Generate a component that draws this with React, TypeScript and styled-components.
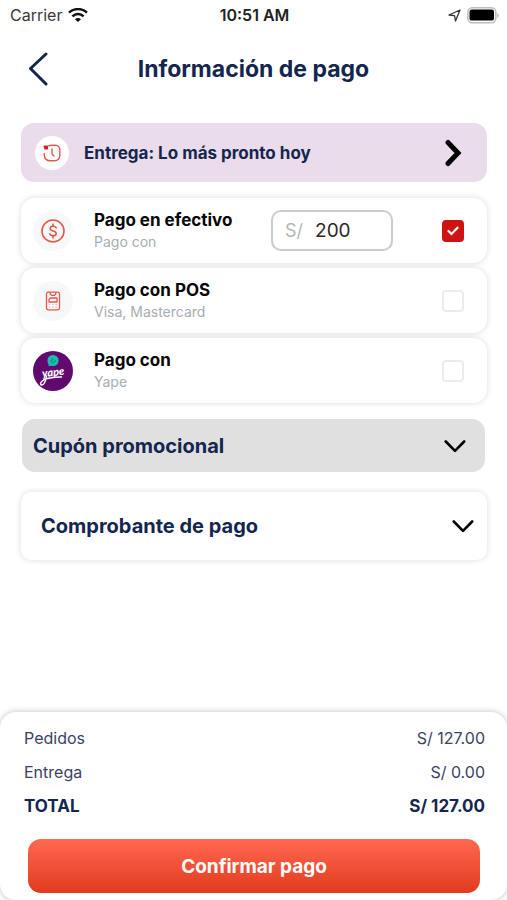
import React, { useState } from "react";
import styled, { createGlobalStyle } from "styled-components";

const navy = "#14264f";
const coral = "#e4574b";

const GlobalStyle = createGlobalStyle`
  *, *::before, *::after { box-sizing: border-box; }
  body { margin: 0; background: #fff; font-family: Inter, "Open Sans", sans-serif; }
  button, input { font: inherit; color: inherit; }
  svg { display: block; flex: none; }
`;

const Page = styled.div`
  display: flex;
  flex-direction: column;
  min-height: 100vh;
  color: ${navy};
`;

const StatusBar = styled.div`
  display: grid;
  grid-template-columns: 1fr auto 1fr;
  align-items: center;
  height: 30px;
  padding: 0 8px 0 10px;
  font-size: 16px;
  color: #3a3a3a;
`;

const StatusGroup = styled.div<{ $end?: boolean }>`
  display: flex;
  align-items: center;
  justify-content: ${(p) => (p.$end ? "flex-end" : "flex-start")};
  gap: 6px;
`;

const Clock = styled.time`
  font-weight: 600;
  color: #222;
`;

const Header = styled.header`
  display: grid;
  grid-template-columns: 48px 1fr 48px;
  align-items: center;
  height: 78px;
  padding: 0 14px;
`;

const BackButton = styled.button`
  display: grid;
  place-items: center;
  height: 48px;
  padding: 0;
  border: 0;
  background: none;
  cursor: pointer;
`;

const Title = styled.h1`
  margin: 0;
  font-size: 23px;
  line-height: 32px;
  font-weight: 700;
  text-align: center;
`;

const Content = styled.main`
  display: flex;
  flex-direction: column;
  gap: 16px;
  padding: 15px 20px 24px 21px;
`;

const DeliveryButton = styled.button`
  display: flex;
  align-items: center;
  gap: 15px;
  height: 59px;
  padding: 0 24px 0 14px;
  border: 0;
  border-radius: 13px;
  background: #eadcea;
  font-size: 17px;
  font-weight: 700;
  text-align: left;
  cursor: pointer;
`;

const Grow = styled.span`
  flex: 1;
`;

const IconDisc = styled.span<{ $size: number; $color: string }>`
  display: grid;
  place-items: center;
  flex: none;
  width: ${(p) => p.$size}px;
  height: ${(p) => p.$size}px;
  border-radius: 50%;
  background: ${(p) => p.$color};
  overflow: hidden;
`;

const Methods = styled.div`
  display: flex;
  flex-direction: column;
  gap: 5px;
`;

const MethodCard = styled.div`
  display: flex;
  align-items: center;
  height: 65px;
  padding: 0 23px 0 12px;
  border-radius: 14px;
  background: #fff;
  box-shadow: 0 0 6px rgba(0, 0, 0, 0.14);
`;

const MethodText = styled.label`
  display: flex;
  flex-direction: column;
  flex: 1;
  margin-left: 21px;
  cursor: pointer;
`;

const MethodName = styled.span`
  font-size: 17px;
  line-height: 23px;
  font-weight: 700;
  color: #050505;
`;

const MethodDetail = styled.span`
  font-size: 14px;
  line-height: 20px;
  color: #a9adb5;
`;

const AmountField = styled.label`
  display: flex;
  align-items: center;
  gap: 12px;
  width: 122px;
  height: 41px;
  margin-right: 49px;
  padding: 0 12px;
  border: 2px solid #cbcbcb;
  border-radius: 10px;
  font-size: 18px;
  color: #b5b5b5;
`;

const AmountInput = styled.input`
  flex: 1;
  min-width: 0;
  padding: 0;
  border: 0;
  outline: 0;
  background: none;
  font-size: 19px;
  color: #2b2626;
`;

const CheckFrame = styled.span`
  display: grid;
  place-items: center;
  width: 22px;
  height: 22px;

  > * { grid-area: 1 / 1; }
  svg { pointer-events: none; }
`;

const CheckInput = styled.input`
  appearance: none;
  width: 22px;
  height: 22px;
  margin: 0;
  border: 2px solid #ebebeb;
  border-radius: 4px;
  background: #fff;
  cursor: pointer;

  &:checked {
    border-color: #cf1312;
    background: #cf1312;
  }
`;

const Panel = styled.button<{ $raised?: boolean }>`
  display: flex;
  align-items: center;
  height: ${(p) => (p.$raised ? 68 : 53)}px;
  margin: ${(p) => (p.$raised ? "4px 0 0" : "0 2px 0 1px")};
  padding: ${(p) => (p.$raised ? "0 13px 0 20px" : "0 19px 0 11px")};
  border: 0;
  border-radius: ${(p) => (p.$raised ? 10 : 13)}px;
  background: ${(p) => (p.$raised ? "#fff" : "#e0e0e0")};
  box-shadow: ${(p) => (p.$raised ? "0 0 6px rgba(0, 0, 0, 0.14)" : "none")};
  font-size: 20px;
  font-weight: 700;
  text-align: left;
  cursor: pointer;
`;

const Footer = styled.footer`
  display: flex;
  flex-direction: column;
  margin-top: auto;
  padding: 9px 22px 7px 24px;
  border-radius: 16px;
  background: #fff;
  box-shadow: 0 0 6px rgba(0, 0, 0, 0.26);
`;

const Totals = styled.dl`
  margin: 0;
`;

const TotalRow = styled.div<{ $strong?: boolean }>`
  display: flex;
  justify-content: space-between;
  font-size: ${(p) => (p.$strong ? 17 : 16)}px;
  line-height: 34px;
  font-weight: ${(p) => (p.$strong ? 700 : 400)};
  color: ${(p) => (p.$strong ? navy : "#3c4263")};

  dd { margin: 0; }
`;

const ConfirmButton = styled.button`
  height: 54px;
  margin: 16px 5px 0 4px;
  border: 0;
  border-radius: 13px;
  background: linear-gradient(#ff6950, #e23a1e);
  font-size: 19px;
  font-weight: 700;
  color: #fff;
  cursor: pointer;
`;

const WifiIcon = () => (
  <svg width="20" height="15" viewBox="0 0 20 15" fill="none" stroke="#111" strokeWidth="2.5">
    <path d="M1 4.7a13 13 0 0 1 18 0" />
    <path d="M4.4 8.3a8.2 8.2 0 0 1 11.200 0" />
    <path d="M10 14 7 11.200a4.200 4.200 0 0 1 6 0z" fill="#111" stroke="none" />
  </svg>
);

const LocationIcon = () => (
  <svg width="13" height="13" viewBox="0 0 13 13" fill="none" stroke="#333" strokeWidth="1.3" strokeLinejoin="round">
    <path d="M12 1 1 6l5.500.700L7.500 12z" />
  </svg>
);

const BatteryIcon = () => (
  <svg width="32" height="17" viewBox="0 0 32 17">
    <rect x="0.8" y="0.8" width="28" height="15" rx="4.5" fill="#fff" stroke="#bdbdbd" strokeWidth="1.6" />
    <rect x="2.5" y="2.6" width="24.5" height="11" rx="2.2" fill="#000" />
    <path d="M30.200 6v5a2.800 2.800 0 0 0 0-5z" fill="#bdbdbd" />
  </svg>
);

const BackIcon = () => (
  <svg width="21" height="34" viewBox="0 0 21 34" fill="none" stroke={navy} strokeWidth="3" strokeLinecap="round" strokeLinejoin="round">
    <path d="M18 2 2.500 16.500 18 32" />
  </svg>
);

const ForwardIcon = () => (
  <svg width="20" height="28" viewBox="0 0 20 28" fill="none" stroke="#000" strokeWidth="5" strokeLinecap="round">
    <path d="M5 3.500 15 14 5 24.500" />
  </svg>
);

const DownIcon = () => (
  <svg width="22" height="14" viewBox="0 0 22 14" fill="none" stroke="#000" strokeWidth="2.6" strokeLinecap="round" strokeLinejoin="round">
    <path d="m1.800 2.500 9.200 9.300 9.200-9.300" />
  </svg>
);

const HistoryIcon = () => (
  <svg width="18" height="18" viewBox="0 0 18 18" fill="none" stroke={coral} strokeWidth="1.4" strokeLinecap="round" strokeLinejoin="round">
    <path d="M5.500 1.800C6.500 1.300 7.500 1.200 9 1.200h3.200a4.600 4.600 0 0 1 4.600 4.600v6a5 5 0 0 1-5 5H7.500c-3.600 0-6.200-2-6.200-5.500V9.500" />
    <path d="M1.300 2.200h3v2.600H2z" fill="#d3202a" stroke="#d3202a" />
    <path d="M9 5v4.300q0 1.400 2 2.700" />
  </svg>
);

const DollarIcon = () => (
  <svg width="24" height="24" viewBox="0 0 24 24" fill="none" stroke={coral} strokeWidth="1.6" strokeLinecap="round">
    <circle cx="12" cy="12" r="11" />
    <path d="M15.200 8.800c-.5-1-1.600-1.600-3.100-1.600-1.700 0-2.900.8-2.900 2.200 0 3.200 6 1.800 6 5 0 1.500-1.200 2.400-3.100 2.400-1.700 0-2.900-.7-3.400-1.900M12 5v2M12 17v2" />
  </svg>
);

const PosIcon = () => (
  <svg width="16" height="20" viewBox="0 0 16 20" fill="none" stroke={coral} strokeWidth="1.3" strokeLinejoin="round">
    <rect x="1.500" y="1.200" width="13" height="17.600" rx="1.800" />
    <path d="M5.200 1.200v1.900l1.300 1.200h3l1.300-1.200V1.200" />
    <path d="M5.500 7H12v4H4V8.500z" />
    <path d="M4 13.500h1m2 0h1.500m2 0H12M4 16h1m2 0h1.500m2 0H12" strokeWidth=".8" opacity=".5" />
  </svg>
);

const YapeLogo = () => (
  <svg width="40" height="40" viewBox="0 0 40 40" role="img" aria-label="Yape">
    <path d="M15.300 15.200 16 11.800l3.200 2.500z" fill="#18bfae" />
    <circle cx="20" cy="9.500" r="5.600" fill="#18bfae" />
    <path d="M17.800 9.200c.2 3.700 4.600 3.100 4.700-.4M18.700 7.900c1.200-1.300 1.700.8.500 1.700" fill="none" stroke="#087f87" strokeWidth="1" />
    <text x="9" y="25" fill="#fff" fontFamily="Lato, sans-serif" fontSize="11" fontStyle="italic" fontWeight="900" transform="rotate(-7 20 22)">yape</text>
    <path d="M13.500 25c-.8 5.500-2.800 9.500-5 9-2.600-.7.300-5.500 6-6.500 4.800-.8 8.500-1.800 14-1.500" fill="none" stroke="#fff" strokeWidth="1.500" strokeLinecap="round" />
  </svg>
);

const TickIcon = () => (
  <svg width="12" height="10" viewBox="0 0 12 10" fill="none" stroke="#fff" strokeWidth="2.200" strokeLinecap="round">
    <path d="m1.500 5 3 3 6-6.300" />
  </svg>
);

type Method = { id: string; name: string; detail: string; icon: React.ReactNode; disc: string };

const methods: Method[] = [
  { id: "cash", name: "Pago en efectivo", detail: "Pago con", icon: <DollarIcon />, disc: "#f7f9f9" },
  { id: "pos", name: "Pago con POS", detail: "Visa, Mastercard", icon: <PosIcon />, disc: "#f7f9f9" },
  { id: "yape", name: "Pago con", detail: "Yape", icon: <YapeLogo />, disc: "#62096f" },
];

const totals = [
  { label: "Pedidos", value: "S/ 127.00" },
  { label: "Entrega", value: "S/ 0.00" },
  { label: "TOTAL", value: "S/ 127.00", strong: true },
];

export default function App() {
  const [selected, setSelected] = useState("cash");
  const [amount, setAmount] = useState("200");

  return (
    <Page>
      <GlobalStyle />
      <StatusBar>
        <StatusGroup>
          Carrier
          <WifiIcon />
        </StatusGroup>
        <Clock>10:51 AM</Clock>
        <StatusGroup $end>
          <LocationIcon />
          <BatteryIcon />
        </StatusGroup>
      </StatusBar>

      <Header>
        <BackButton aria-label="Volver">
          <BackIcon />
        </BackButton>
        <Title>Información de pago</Title>
      </Header>

      <Content>
        <DeliveryButton>
          <IconDisc $size={34} $color="#fff">
            <HistoryIcon />
          </IconDisc>
          <Grow>Entrega: Lo más pronto hoy</Grow>
          <ForwardIcon />
        </DeliveryButton>

        <Methods>
          {methods.map((m) => (
            <MethodCard key={m.id}>
              <IconDisc $size={40} $color={m.disc}>
                {m.icon}
              </IconDisc>
              <MethodText htmlFor={m.id}>
                <MethodName>{m.name}</MethodName>
                <MethodDetail>{m.detail}</MethodDetail>
              </MethodText>
              {m.id === "cash" && (
                <AmountField>
                  S/
                  <AmountInput inputMode="decimal" value={amount} onChange={(e) => setAmount(e.target.value)} />
                </AmountField>
              )}
              <CheckFrame>
                <CheckInput type="checkbox" id={m.id} checked={selected === m.id} onChange={() => setSelected(m.id)} />
                {selected === m.id && <TickIcon />}
              </CheckFrame>
            </MethodCard>
          ))}
        </Methods>

        <Panel aria-expanded={false}>
          <Grow>Cupón promocional</Grow>
          <DownIcon />
        </Panel>
        <Panel $raised aria-expanded={false}>
          <Grow>Comprobante de pago</Grow>
          <DownIcon />
        </Panel>
      </Content>

      <Footer>
        <Totals>
          {totals.map((t) => (
            <TotalRow key={t.label} $strong={t.strong}>
              <dt>{t.label}</dt>
              <dd>{t.value}</dd>
            </TotalRow>
          ))}
        </Totals>
        <ConfirmButton>Confirmar pago</ConfirmButton>
      </Footer>
    </Page>
  );
}
